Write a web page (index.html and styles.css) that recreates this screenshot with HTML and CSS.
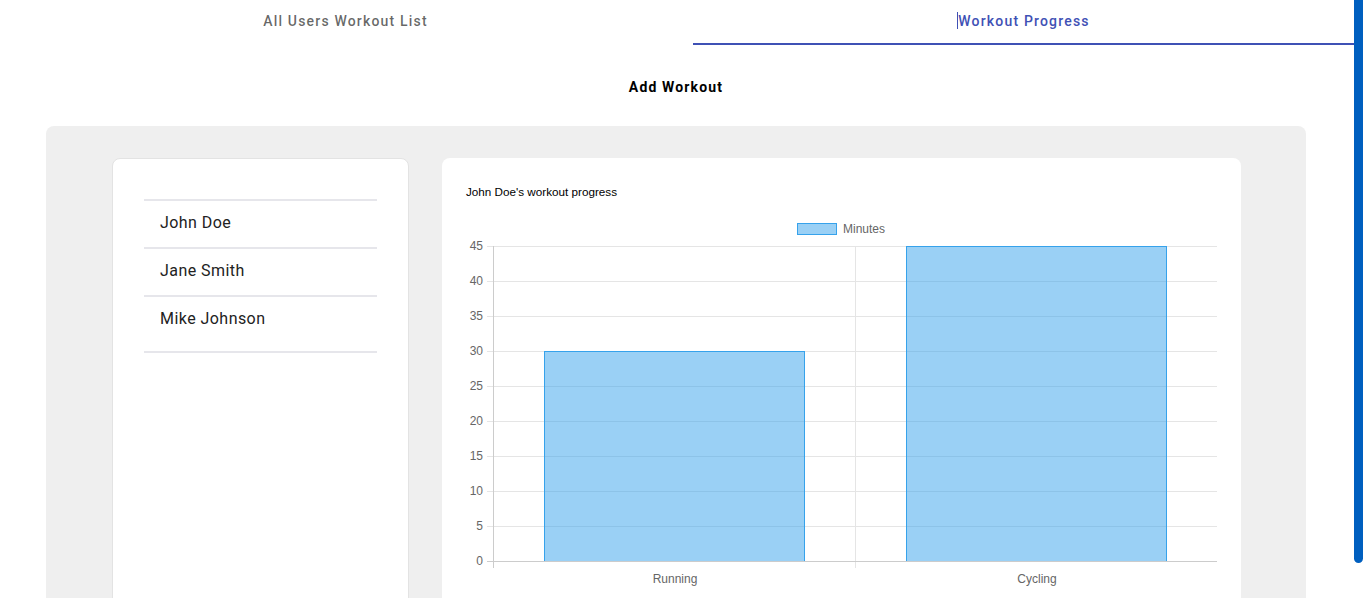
FILE: index.html
```html
<!DOCTYPE html>
<html lang="en">
<head>
<meta charset="utf-8">
<title>Workout Progress</title>
<link rel="stylesheet" href="styles.css">
</head>
<body>
<div class="app">
  <nav class="tabs">
    <div class="tab tab-first">All Users Workout List</div>
    <div class="tab tab-active"><span class="caret"></span>Workout Progress</div>
  </nav>
  <h2 class="add-title">Add Workout</h2>
  <section class="panel">
    <aside class="card users">
      <ul class="user-list">
        <li class="user">John Doe</li>
        <li class="user">Jane Smith</li>
        <li class="user user-last">Mike Johnson</li>
      </ul>
    </aside>
    <div class="card chart-card">
      <div class="chart-title">John Doe's workout progress</div>
      <svg class="chart" width="752" height="388" viewBox="0 0 752 388" xmlns="http://www.w3.org/2000/svg">
        <rect x="331.5" y="13.5" width="39" height="11" fill="#9ad0f5" stroke="#36a2eb" stroke-width="1"/>
        <text x="377" y="23" class="lbl">Minutes</text>
        <g stroke="#e5e5e5" stroke-width="1">
          <line x1="21" y1="36.5" x2="751" y2="36.5"/>
          <line x1="21" y1="71.5" x2="751" y2="71.5"/>
          <line x1="21" y1="106.5" x2="751" y2="106.5"/>
          <line x1="21" y1="141.5" x2="751" y2="141.5"/>
          <line x1="21" y1="176.5" x2="751" y2="176.5"/>
          <line x1="21" y1="211.5" x2="751" y2="211.5"/>
          <line x1="21" y1="246.5" x2="751" y2="246.5"/>
          <line x1="21" y1="281.5" x2="751" y2="281.5"/>
          <line x1="21" y1="316.5" x2="751" y2="316.5"/>
          <line x1="389.5" y1="36" x2="389.5" y2="358"/>
        </g>
        <rect x="78.5" y="141.5" width="260" height="210" fill="rgba(54,162,235,0.5)" stroke="#36a2eb" stroke-width="1"/>
        <rect x="440.5" y="36.5" width="260" height="315" fill="rgba(54,162,235,0.5)" stroke="#36a2eb" stroke-width="1"/>
        <g stroke="#cccccc" stroke-width="1">
          <line x1="27.5" y1="36" x2="27.5" y2="358"/>
          <line x1="21" y1="351.5" x2="751" y2="351.5"/>
        </g>
        <g class="lbl" text-anchor="end">
          <text x="17" y="40">45</text>
          <text x="17" y="75">40</text>
          <text x="17" y="110">35</text>
          <text x="17" y="145">30</text>
          <text x="17" y="180">25</text>
          <text x="17" y="215">20</text>
          <text x="17" y="250">15</text>
          <text x="17" y="285">10</text>
          <text x="17" y="320">5</text>
          <text x="17" y="355">0</text>
        </g>
        <g class="lbl" text-anchor="middle">
          <text x="209" y="373">Running</text>
          <text x="571" y="373">Cycling</text>
        </g>
      </svg>
    </div>
  </section>
</div>
<div class="scroll-thumb"></div>
</body>
</html>
```

FILE: styles.css
```css
* { box-sizing: border-box; }
html, body { margin: 0; padding: 0; background: #ffffff; overflow: hidden; }
body { font-family: Roboto, "Liberation Sans", Arial, sans-serif; color: #000; }
.app { width: 1354px; }
.tabs { display: flex; height: 45px; }
.tab {
  display: flex; align-items: center; justify-content: center;
  font-size: 14px; font-weight: 500; letter-spacing: 1.18px;
  color: rgba(0,0,0,0.6); height: 45px; padding-bottom: 4px;
}
.tab-first { width: 693px; padding-right: 2px; }
.tab-active { flex: 1; color: #3f51b5; border-bottom: 2px solid #3f51b5; padding-bottom: 2px; }
.caret { display: inline-block; width: 1px; height: 17px; background: #3f51b5; }
.add-title {
  margin: 32px 0 0; text-align: center; font-size: 14px; line-height: 20px;
  font-weight: 700; letter-spacing: 1.15px; color: #000; padding-right: 2px;
}
.panel {
  margin: 29px 48px 0 46px; background: #efefef; border-radius: 8px;
  padding: 32px 65px 0 66px; display: flex; gap: 33px; height: 480px;
}
.card { background: #fff; border-radius: 8px; }
.users { width: 297px; border: 1px solid #e3e3e3; padding: 40px 31px; height: 460px; }
.user-list { list-style: none; margin: 0; padding: 0; border-top: 2px solid #e6e6eb; border-bottom: 2px solid #e6e6eb; }
.user {
  height: 48px; padding: 0 16px 3px; display: flex; align-items: center;
  font-size: 16px; letter-spacing: 0.45px; color: #222;
  border-top: 2px solid #e6e6eb;
}
.user:first-child { border-top: none; height: 46px; }
.user-last { height: 56px; padding-bottom: 11px; }
.chart-card { width: 799px; padding: 27px 24px 0; height: 460px; }
.chart-title { font-family: "Liberation Sans", Arial, sans-serif; font-size: 11.7px; line-height: 14px; color: #000; }
.chart { display: block; margin-top: 11px; }
.lbl { font-family: "Liberation Sans", Arial, sans-serif; font-size: 12px; fill: #666; }
.scroll-thumb {
  position: absolute; top: 0; right: 0; width: 9px; height: 563px;
  background: #005fbf; border-radius: 0 0 5px 5px;
}
```
